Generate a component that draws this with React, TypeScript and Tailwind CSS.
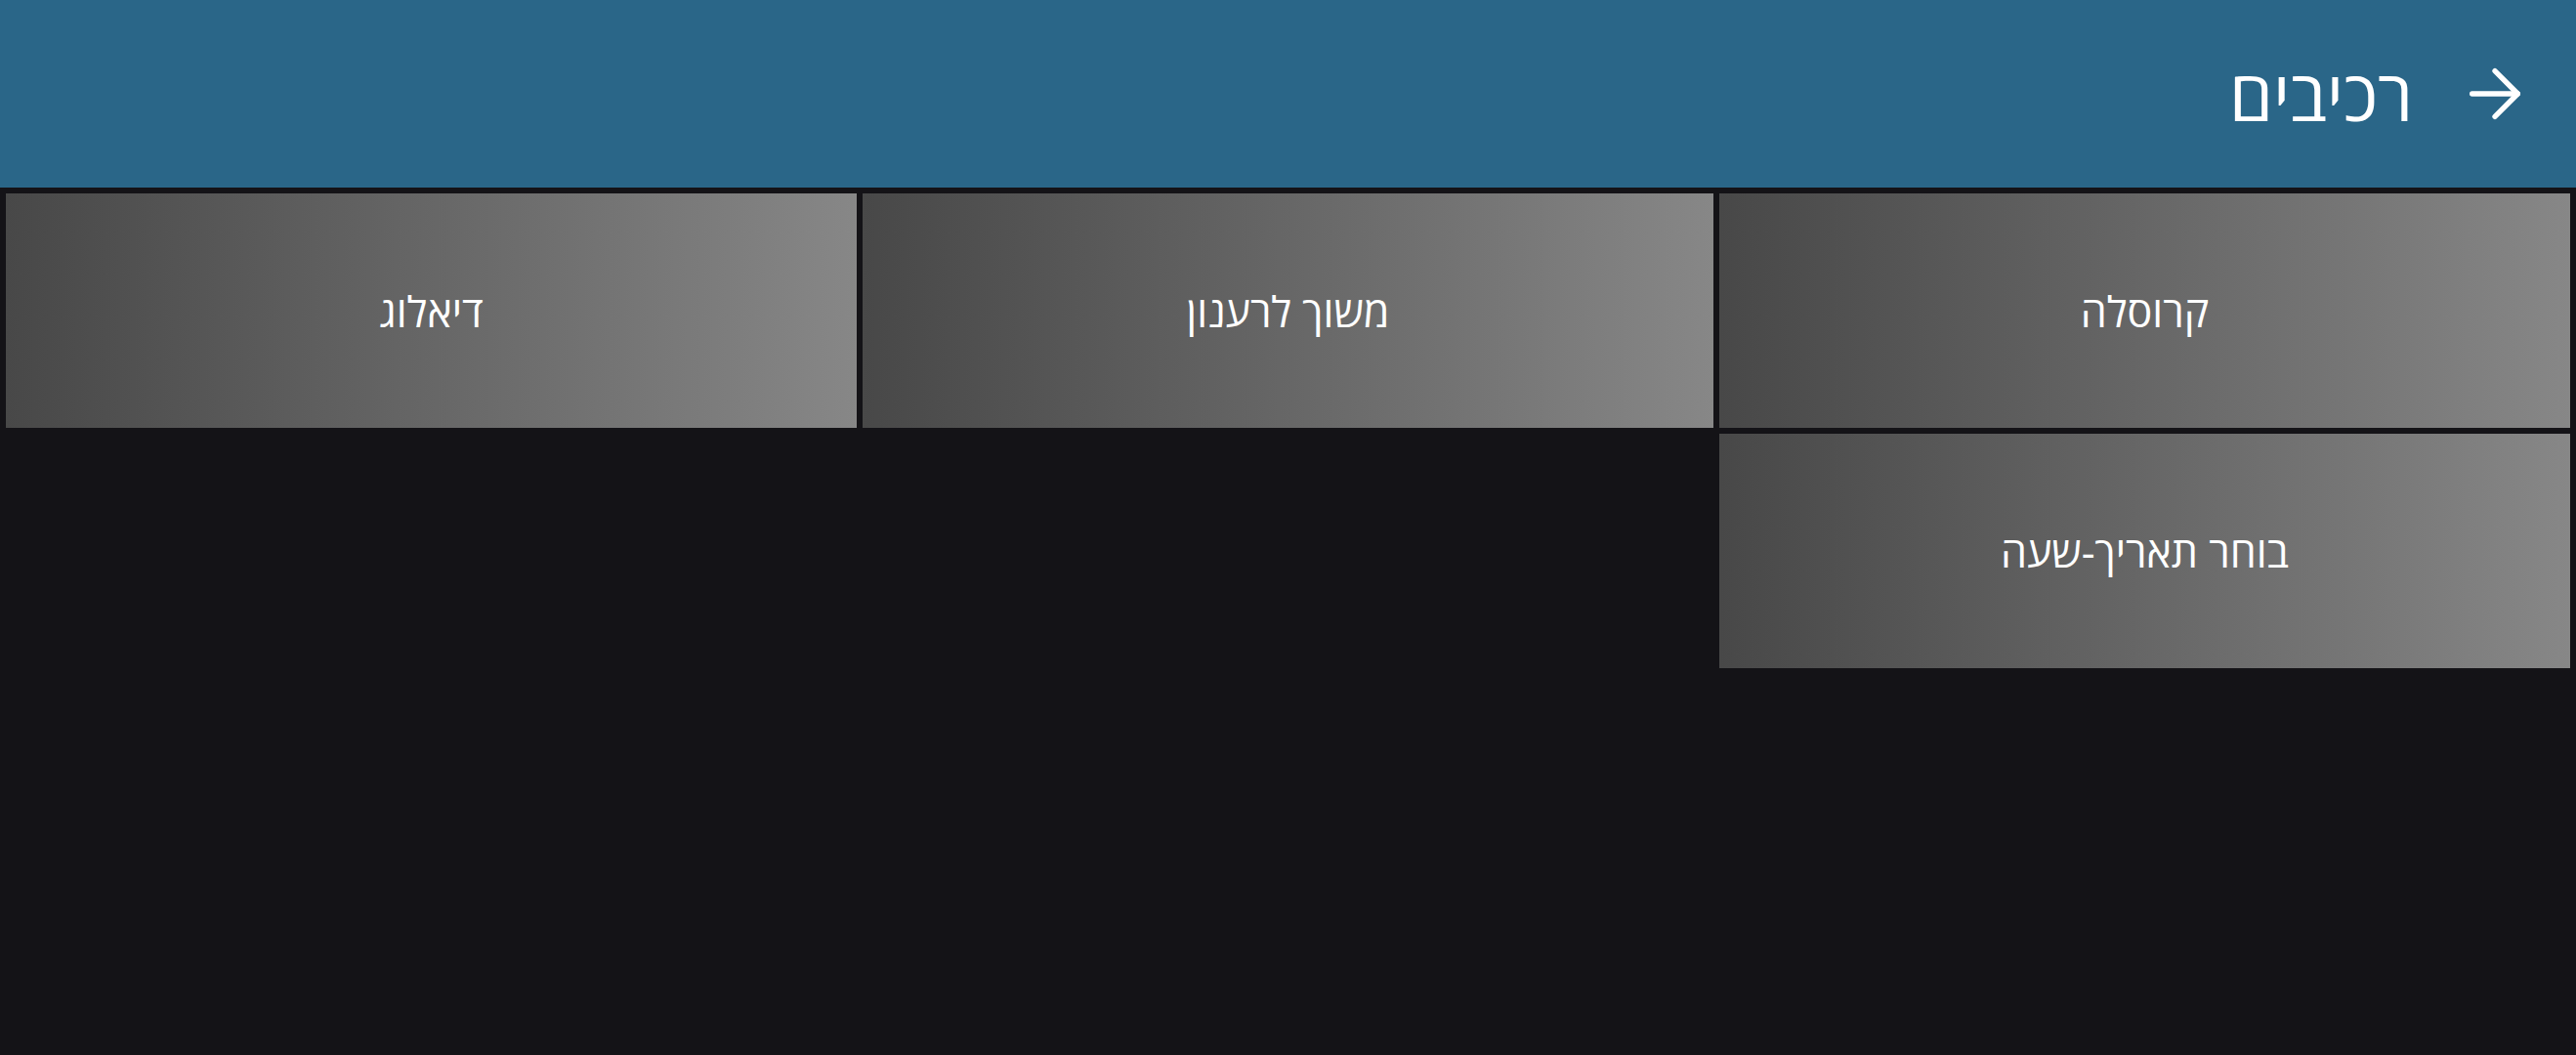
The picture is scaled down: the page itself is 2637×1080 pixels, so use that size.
import React from 'react';
import { ArrowRight } from 'lucide-react';

const ITEMS = ['קרוסלה', 'משוך לרענון', 'דיאלוג', 'בוחר תאריך-שעה'];

const App: React.FC = () => {
  return (
    <div
      dir="rtl"
      className="min-h-screen w-full bg-[#141317] text-white"
      style={{ fontFamily: '"Open Sans", "DejaVu Sans", sans-serif' }}
    >
      <header className="h-[192px] bg-[#2a6688] flex items-center pr-[43px] gap-[44px]">
        <ArrowRight className="w-[80px] h-[80px] text-white" strokeWidth={1.6} />
        <h1 className="text-[72px] leading-none font-normal">רכיבים</h1>
      </header>

      <div className="grid grid-cols-3 gap-[6px] p-[6px]">
        {ITEMS.map((item) => (
          <button
            key={item}
            className="h-[240px] pt-[2px] flex items-center justify-center bg-gradient-to-l from-[#878787] to-[#484848] text-[43px] font-normal text-white"
          >
            {item}
          </button>
        ))}
      </div>
    </div>
  );
};

export default App;
